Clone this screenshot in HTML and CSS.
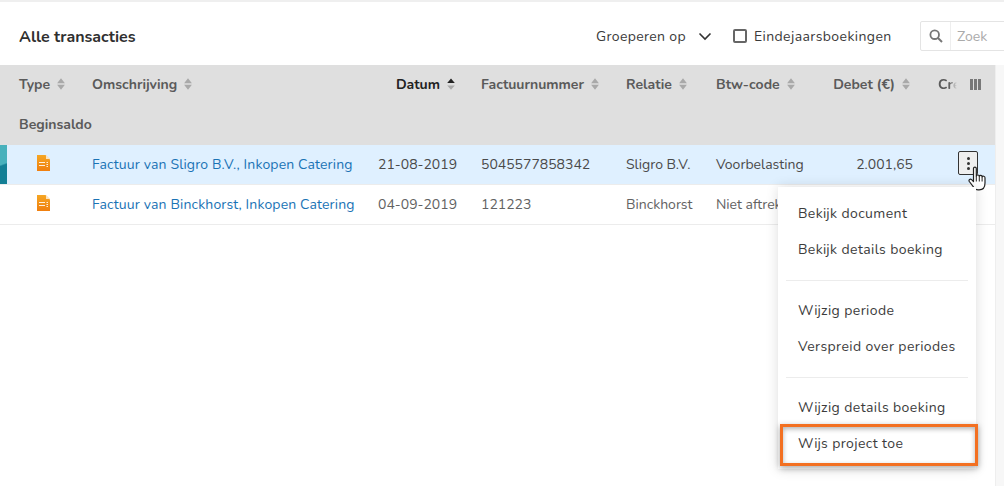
FILE: index.html
```html
<!DOCTYPE html>
<html lang="nl">
<head>
<meta charset="utf-8">
<title>Alle transacties</title>
<link rel="stylesheet" href="styles.css">
</head>
<body>
<svg class="defs" width="0" height="0" aria-hidden="true">
  <defs>
    <linearGradient id="docg" x1="0" y1="0" x2="0" y2="1"><stop offset="0" stop-color="#f5a623"/><stop offset="1" stop-color="#f07f0f"/></linearGradient>
    <symbol id="sort" viewBox="0 0 8 12"><path d="M4 0.200 7.900 5.200H.1zM4 11.800 .1 6.800h7.800z" fill="#a9a9a9"/></symbol>
    <symbol id="sortup" viewBox="0 0 8 12"><path d="M4 .6 7.800 5H.2z" fill="#222"/><path d="M4 11.800 .2 7.400h7.600z" fill="#a9a9a9"/></symbol>
    <symbol id="doc" viewBox="0 0 13 16"><path d="M0 0h8.500L13 4.500V16H0z" fill="url(#docg)"/><path d="M9 0 13 4H9z" fill="#fde3bd"/><path d="M2 7h6v1H2zM2 10h6v1H2zM9.500 7H11v1H9.500zM9.500 9H11v1H9.500zM9.500 11H11v1H9.500z" fill="#fff" opacity=".85"/></symbol>
  </defs>
</svg>
<div class="page">
  <header class="toolbar">
    <h1 class="title">Alle transacties</h1>
    <div class="tools">
      <button class="group-btn">Groeperen op
        <svg class="chev" width="14" height="9" viewBox="0 0 14 9"><path d="M1.500 1.500 7 7l5.500-5.500" fill="none" stroke="#333" stroke-width="1.600"/></svg>
      </button>
      <label class="check"><span class="box"></span>Eindejaarsboekingen</label>
      <div class="search">
        <span class="search-ico"><svg width="14" height="14" viewBox="0 0 14 14"><circle cx="5.700" cy="5.700" r="4.300" fill="none" stroke="#777" stroke-width="1.800"/><path d="M9 9l4 4" stroke="#777" stroke-width="2"/></svg></span>
        <span class="search-input">Zoek</span>
      </div>
    </div>
  </header>
  <div class="content">
    <main class="panel">
      <section class="thead">
        <div class="row head-row">
          <span class="th">Type <svg class="si"><use href="#sort"/></svg></span>
          <span class="th">Omschrijving <svg class="si"><use href="#sort"/></svg></span>
          <span class="th th-date">Datum <svg class="si"><use href="#sortup"/></svg></span>
          <span class="th">Factuurnummer <svg class="si"><use href="#sort"/></svg></span>
          <span class="th">Relatie <svg class="si"><use href="#sort"/></svg></span>
          <span class="th">Btw-code <svg class="si"><use href="#sort"/></svg></span>
          <span class="th th-num">Debet (€) <svg class="si"><use href="#sort"/></svg></span>
          <span class="th th-cr">Cre</span>
          <span class="cols"><i></i><i></i><i></i></span>
        </div>
        <div class="begin">Beginsaldo</div>
      </section>
      <div class="row body-row selected">
        <span class="cell-ico"><svg width="13" height="16"><use href="#doc"/></svg></span>
        <a class="link">Factuur van Sligro B.V., Inkopen Catering</a>
        <span>21-08-2019</span>
        <span>5045577858342</span>
        <span>Sligro B.V.</span>
        <span>Voorbelasting</span>
        <span class="num">2.001,65</span>
        <span></span>
        <span class="kebab"><b></b><b></b><b></b></span>
      </div>
      <div class="row body-row muted">
        <span class="cell-ico"><svg width="13" height="16"><use href="#doc"/></svg></span>
        <a class="link">Factuur van Binckhorst, Inkopen Catering</a>
        <span>04-09-2019</span>
        <span>121223</span>
        <span>Binckhorst</span>
        <span>Niet aftrekbaar</span>
        <span class="num"></span>
        <span></span>
        <span></span>
      </div>
    </main>
    <aside class="strip"></aside>
  </div>
</div>
<svg class="hand" width="20" height="25" viewBox="0 0 20 25"><path d="M5.500 2.500c0-1.900 2.800-1.900 2.800 0V10c.4-1.500 3-1.300 3 .3.400-1.300 2.800-1.100 2.800.5.500-1 2.900-.8 2.900 1V17c0 3.800-2 6.800-5.800 6.800H10c-2.200 0-3.400-1-4.400-2.600L1.300 15.500c-1-1.800 1-3.100 2.300-1.900l1.900 1.900z" fill="#fff" stroke="#222" stroke-width="1.200" stroke-linejoin="round"/><path d="M8.300 10v5.500M11.300 10.300V15.500M14.100 10.800v4.700" stroke="#222" stroke-width="1"/></svg>
<nav class="menu">
  <ul class="menu-group">
    <li>Bekijk document</li>
    <li>Bekijk details boeking</li>
  </ul>
  <ul class="menu-group">
    <li>Wijzig periode</li>
    <li>Verspreid over periodes</li>
  </ul>
  <ul class="menu-group">
    <li>Wijzig details boeking</li>
    <li>Wijs project toe</li>
  </ul>
</nav>
<div class="callout"></div>
</body>
</html>
```
FILE: styles.css
```css
* { box-sizing: border-box; }
html, body { margin: 0; height: 100%; overflow: hidden; }
body { width: 1004px; height: 486px; background: #fff; font-family: "Nunito", "Noto Sans", "Open Sans", sans-serif; font-size: 14px; color: #4a4a4a; position: relative; }
.defs { position: absolute; }
.page { display: flex; flex-direction: column; height: 486px; border-top: 2px solid #efefef; }
.toolbar { height: 63px; flex: none; display: flex; align-items: center; justify-content: space-between; padding: 7px 0 0 19px; overflow: hidden; }
.title { margin: 0; font-size: 16px; font-weight: 700; color: #2f2f2f; }
.tools { display: flex; align-items: center; flex: none; width: 424px; margin: -2px -16px 0 0; }
.group-btn { border: 0; background: none; padding: 0; font: inherit; letter-spacing: .35px; color: #3a3a3a; display: flex; align-items: center; gap: 12px; width: 137px; white-space: nowrap; flex: none; }
.check { display: flex; align-items: center; gap: 7px; color: #3a3a3a; width: 187px; flex: none; white-space: nowrap; letter-spacing: .4px; }
.box { width: 14px; height: 14px; border: 2px solid #666; border-radius: 2px; background: #fff; flex: none; }
.search { display: flex; height: 30px; width: 100px; flex: none; border: 1px solid #e4e4e4; border-radius: 2px; }
.search-ico { width: 30px; display: flex; align-items: center; justify-content: center; border-right: 1px solid #eee; }
.search-input { padding: 5px 0 0 6px; color: #aaa; }
.content { display: flex; flex: 1; }
.panel { width: 995px; flex: none; }
.strip { flex: 1; background: #f7f7f7; border-left: 1px solid #eee; }
.thead { background: #dfdfdf; height: 80px; }
.row { display: grid; grid-template-columns: 73px 286px 103px 145px 90px 100px 122px 20px 37px; padding-left: 19px; align-items: center; }
.head-row { height: 40px; padding-bottom: 2px; font-weight: 700; }
.th { display: flex; align-items: center; gap: 2px; white-space: nowrap; color: #5a5a5a; font-size: 14px; }
.si { width: 8px; height: 12px; margin-left: 5px; }
.th-date { justify-content: flex-end; padding-right: 26px; color: #222; }
.th-num { justify-content: flex-end; padding-right: 28px; }
.th-cr { -webkit-mask-image: linear-gradient(90deg, #000 55%, transparent 95%); mask-image: linear-gradient(90deg, #000 55%, transparent 95%); }
.cols { display: flex; gap: 1px; margin-left: 12px; margin-top: 1px; }
.cols i { width: 3px; height: 11px; background: #787878; }
.begin { height: 40px; padding: 10px 0 0 19px; font-weight: 700; color: #5a5a5a; }
.body-row { height: 40px; border-bottom: 1px solid #ececec; white-space: nowrap; }
.muted { color: #626262; }
.selected { background: #dff0ff; position: relative; }
.selected::before { content: ""; position: absolute; left: 0; top: 0; width: 7px; height: 39px; background: linear-gradient(160deg, #48b1bc 48%, #137f95 52%); }
.cell-ico { padding-left: 18px; display: flex; margin-top: -3px; }
.link { color: #1a73b5; letter-spacing: .15px; }
.num { text-align: right; padding-right: 25px; }
.kebab { width: 20px; height: 24px; border: 1px solid #333; border-radius: 2px; background: #efefef; display: flex; flex-direction: column; align-items: center; justify-content: center; gap: 2px; margin-top: -3px; }
.kebab b { width: 3px; height: 3px; border-radius: 50%; background: #333; }
.hand { position: absolute; left: 968px; top: 166px; }
.menu { position: absolute; left: 778px; top: 187px; width: 198px; height: 282px; background: #fff; padding: 9px 8px 0; box-shadow: 0 0 12px rgba(0,0,0,.14); }
.menu-group { list-style: none; margin: 0; padding: 0 0 12px; border-bottom: 1px solid #ececec; }
.menu-group + .menu-group { padding-top: 12px; }
.menu-group:last-child { border: 0; }
.menu-group li { height: 36px; line-height: 36px; padding-left: 12px; color: #3c3c3c; white-space: nowrap; letter-spacing: .4px; }
.callout { position: absolute; left: 780px; top: 424px; width: 198px; height: 42px; border: 3px solid #f37021; box-shadow: 0 2px 6px rgba(0,0,0,.35), inset 0 2px 5px rgba(0,0,0,.3); }
```
